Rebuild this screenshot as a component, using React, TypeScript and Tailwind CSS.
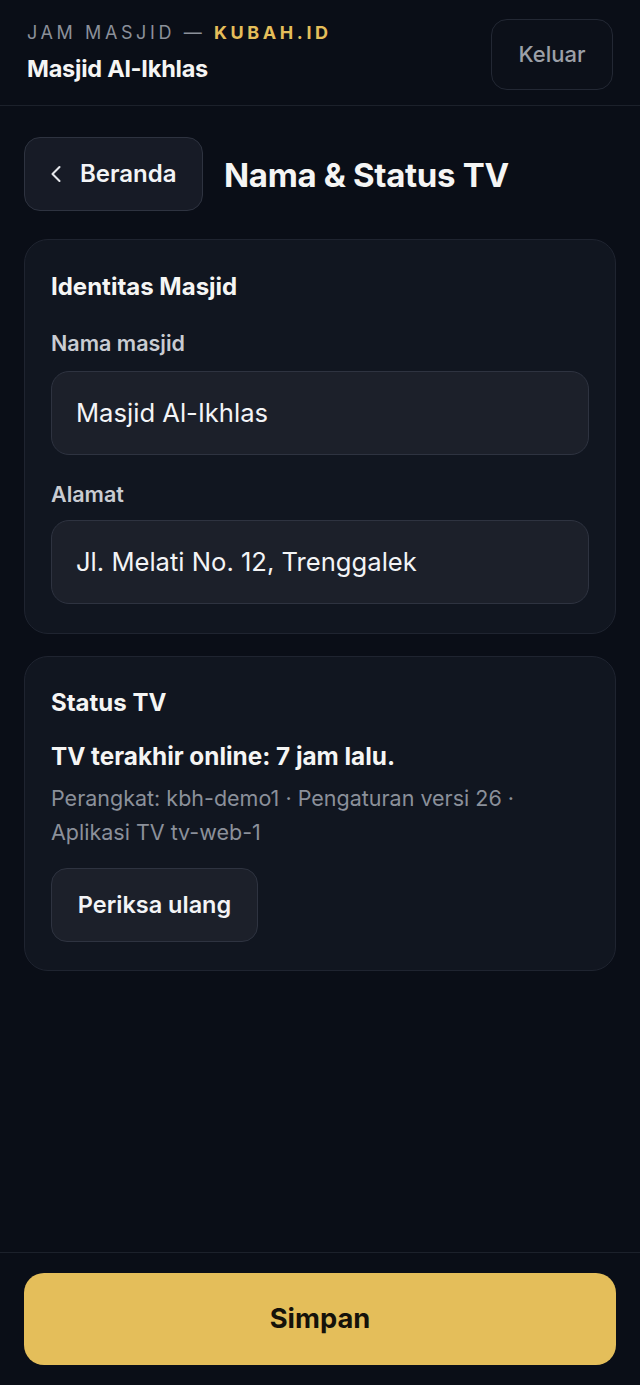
import React from "react";

function ChevronLeft() {
  return (
    <svg width="28" height="28" viewBox="0 0 24 24" fill="none" stroke="currentColor" strokeWidth="1.8" strokeLinecap="round" strokeLinejoin="round">
      <path d="m15 18-6-6 6-6" />
    </svg>
  );
}

export default function App() {
  return (
    <div
      className="min-h-screen flex flex-col bg-[#0a0e17] text-[#f3f4f6]"
      style={{ fontFamily: "Inter, 'Noto Sans', sans-serif" }}
    >
      <header className="flex items-center justify-between h-[106px] px-[27px] border-b border-[#1c212b]">
        <div className="flex flex-col">
          <div className="text-[18px] leading-[24px] tracking-[0.2em] text-[#8b909a]">
            JAM MASJID — <span className="font-bold text-[#e4be5a]">KUBAH.ID</span>
          </div>
          <div className="mt-[9px] text-[23.5px] leading-[30px] font-bold tracking-[-0.01em] text-[#f5f5f4]">Masjid Al-Ikhlas</div>
        </div>
        <button className="mt-[3px] h-[71px] w-[122px] rounded-[16px] border border-[#232834] bg-[#0c1019] text-[22px] font-medium text-[#9ca0a8]">
          Keluar
        </button>
      </header>

      <main className="flex-1 px-6 pt-[31px]">
        <div className="flex items-center gap-[21px]">
          <button className="flex items-center h-[74px] w-[179px] rounded-[16px] border border-[#2e3340] bg-[#171b26] pl-[17px] text-[24px] font-semibold text-[#f3f4f6]">
            <span className="text-[#e5e7eb] mr-[10px]"><ChevronLeft /></span>
            Beranda
          </button>
          <h1 className="mt-[3px] text-[33px] font-bold tracking-[-0.01em] text-[#f5f5f4]">Nama &amp; Status TV</h1>
        </div>

        <section className="mt-[28px] rounded-[24px] border border-[#1f2430] bg-[#111620] px-[26px] pt-[31px] pb-[29px]">
          <h2 className="text-[24px] leading-[32px] font-bold text-[#f5f5f4]">Identitas Masjid</h2>
          <label className="block mt-[26px] text-[21.5px] leading-[28px] font-semibold text-[#c9ccd2]">Nama masjid</label>
          <div className="mt-[14px] flex items-center h-[84px] rounded-[18px] border border-[#2e3340] bg-[#1c202a] px-[24px] text-[25.6px] text-[#f3f4f6]">
            Masjid Al-Ikhlas
          </div>
          <label className="block mt-[25px] text-[21.5px] leading-[28px] font-semibold text-[#c9ccd2]">Alamat</label>
          <div className="mt-[12px] flex items-center h-[84px] rounded-[18px] border border-[#2e3340] bg-[#1c202a] px-[24px] text-[25.6px] text-[#f3f4f6]">
            Jl. Melati No. 12, Trenggalek
          </div>
        </section>

        <section className="mt-[22px] rounded-[24px] border border-[#1f2430] bg-[#111620] px-[26px] pt-[30px] pb-[28px]">
          <h2 className="text-[24px] leading-[32px] font-bold text-[#f5f5f4]">Status TV</h2>
          <p className="mt-[21px] text-[24.3px] leading-[32px] font-bold text-[#f5f5f4]">TV terakhir online: 7 jam lalu.</p>
          <p className="mt-[9px] text-[21.5px] leading-[34px] text-[#8b909a]">
            Perangkat: kbh-demo1 · Pengaturan versi 26 · Aplikasi TV tv-web-1
          </p>
          <button className="mt-[19px] h-[74px] w-[207px] rounded-[16px] border border-[#2e3340] bg-[#1c202a] text-[23.5px] font-semibold text-[#f3f4f6]">
            Periksa ulang
          </button>
        </section>
      </main>

      <footer className="border-t border-[#1c212b] px-6 pt-[20px] pb-[20px]">
        <button className="w-full h-[92px] rounded-[20px] bg-[#e4be5a] text-[27.3px] font-bold text-[#15120a]">
          Simpan
        </button>
      </footer>
    </div>
  );
}
